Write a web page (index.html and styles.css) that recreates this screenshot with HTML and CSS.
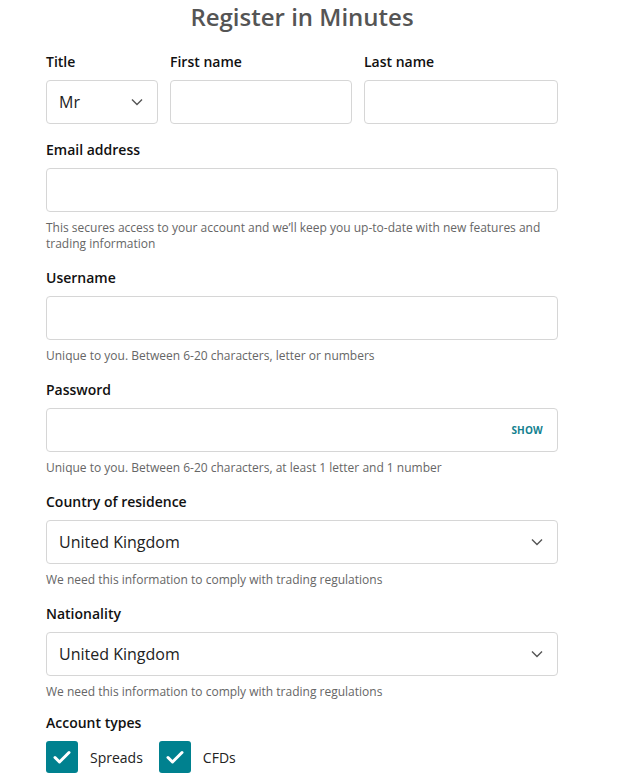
FILE: index.html
```html
<!DOCTYPE html>
<html lang="en">
<head>
<meta charset="utf-8">
<title>Register in Minutes</title>
<link rel="stylesheet" href="styles.css">
</head>
<body>
<main class="form">
  <h1 class="title">Register in Minutes</h1>

  <div class="name-row">
    <div class="field">
      <label class="label">Title</label>
      <div class="input select">
        <span class="value">Mr</span>
        <svg class="chev" width="12" height="8" viewBox="0 0 12 8"><path d="M1 1.5l5 5 5-5" fill="none" stroke="#555" stroke-width="1.4"/></svg>
      </div>
    </div>
    <div class="field">
      <label class="label">First name</label>
      <div class="input"></div>
    </div>
    <div class="field">
      <label class="label">Last name</label>
      <div class="input"></div>
    </div>
  </div>

  <div class="field">
    <label class="label">Email address</label>
    <div class="input"></div>
    <p class="help">This secures access to your account and we’ll keep you up-to-date with new features and trading information</p>
  </div>

  <div class="field">
    <label class="label">Username</label>
    <div class="input"></div>
    <p class="help">Unique to you. Between 6-20 characters, letter or numbers</p>
  </div>

  <div class="field">
    <label class="label">Password</label>
    <div class="input password">
      <span class="show">SHOW</span>
    </div>
    <p class="help">Unique to you. Between 6-20 characters, at least 1 letter and 1 number</p>
  </div>

  <div class="field">
    <label class="label">Country of residence</label>
    <div class="input select">
      <span class="value">United Kingdom</span>
      <svg class="chev" width="12" height="8" viewBox="0 0 12 8"><path d="M1 1.5l5 5 5-5" fill="none" stroke="#555" stroke-width="1.4"/></svg>
    </div>
    <p class="help">We need this information to comply with trading regulations</p>
  </div>

  <div class="field">
    <label class="label">Nationality</label>
    <div class="input select">
      <span class="value">United Kingdom</span>
      <svg class="chev" width="12" height="8" viewBox="0 0 12 8"><path d="M1 1.5l5 5 5-5" fill="none" stroke="#555" stroke-width="1.4"/></svg>
    </div>
    <p class="help">We need this information to comply with trading regulations</p>
  </div>

  <div class="field last">
    <label class="label">Account types</label>
    <div class="checks">
      <div class="check">
        <span class="box"><svg width="18" height="14" viewBox="0 0 18 14"><path d="M2 7.5l4.5 4.5L16 2.5" fill="none" stroke="#fff" stroke-width="3" stroke-linecap="round" stroke-linejoin="round"/></svg></span>
        <span class="check-label">Spreads</span>
      </div>
      <div class="check">
        <span class="box"><svg width="18" height="14" viewBox="0 0 18 14"><path d="M2 7.5l4.5 4.5L16 2.5" fill="none" stroke="#fff" stroke-width="3" stroke-linecap="round" stroke-linejoin="round"/></svg></span>
        <span class="check-label">CFDs</span>
      </div>
    </div>
  </div>
</main>
</body>
</html>
```
FILE: styles.css
```css
* { box-sizing: border-box; }
body {
  margin: 0;
  background: #fff;
  font-family: "Open Sans", "Noto Sans", sans-serif;
  color: #1a1a1a;
}
.form {
  width: 512px;
  margin-left: 46px;
  display: flex;
  flex-direction: column;
  gap: 16px;
}
.title {
  margin: 0 0 2px;
  font-size: 24px;
  line-height: 34px;
  font-weight: 600;
  color: #555;
  text-align: center;
}
.name-row {
  display: grid;
  grid-template-columns: 112px 182px 1fr;
  gap: 12px;
}
.field {
  display: flex;
  flex-direction: column;
}
.label {
  font-size: 14px;
  line-height: 20px;
  font-weight: 600;
  color: #111;
  margin-bottom: 8px;
}
.input {
  height: 44px;
  border: 1px solid #d6d6d6;
  border-radius: 4px;
  background: #fff;
  display: flex;
  align-items: center;
  padding: 0 12px;
}
.select {
  justify-content: space-between;
  padding: 0 14px 0 12px;
}
.value {
  font-size: 16px;
  color: #222;
}
.password {
  justify-content: flex-end;
  padding-right: 14px;
}
.show {
  font-size: 10px;
  font-weight: 700;
  color: #13818f;
  letter-spacing: 0.2px;
}
.help {
  margin: 8px 0 0;
  font-size: 12px;
  line-height: 16px;
  color: #666;
}
.checks {
  display: flex;
  gap: 16px;
}
.check {
  display: flex;
  align-items: center;
  gap: 12px;
}
.box {
  width: 32px;
  height: 32px;
  border-radius: 3px;
  background: #00818f;
  display: flex;
  align-items: center;
  justify-content: center;
}
.check-label {
  font-size: 14px;
  color: #222;
}
.field.last { margin-top: -3px; }
```
